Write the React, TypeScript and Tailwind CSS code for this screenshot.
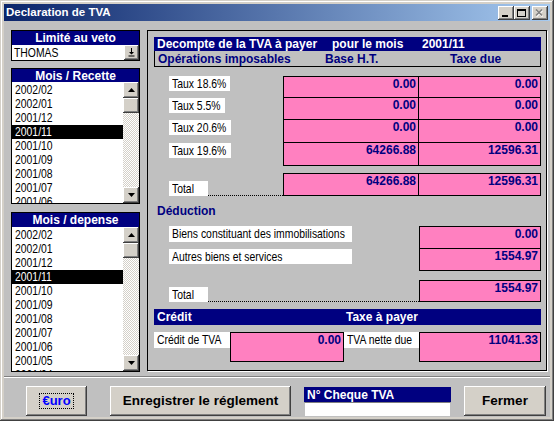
import React from "react";

const raised =
  "bg-[#d4d0c8] shadow-[inset_-1px_-1px_#404040,inset_1px_1px_#ffffff,inset_-2px_-2px_#808080,inset_2px_2px_#d4d0c8]";

function N({ children }: { children: React.ReactNode }) {
  return (
    <span className="inline-block origin-left [transform:scaleX(0.8)] whitespace-nowrap">{children}</span>
  );
}

function TriUp() {
  return (
    <svg width="7" height="4" viewBox="0 0 7 4">
      <path d="M3.5 0 L7 4 L0 4 Z" fill="#000" />
    </svg>
  );
}
function TriDown() {
  return (
    <svg width="7" height="4" viewBox="0 0 7 4">
      <path d="M0 0 L7 0 L3.5 4 Z" fill="#000" />
    </svg>
  );
}

function ScrollBar() {
  return (
    <div className="w-[16px] flex flex-col">
      <div className={`h-[16px] flex items-center justify-center ${raised}`}>
        <TriUp />
      </div>
      <div className={`h-[15px] ${raised}`} />
      <div className="flex-1 bg-[repeating-conic-gradient(#d4d0c8_0%_25%,#ffffff_0%_50%)] bg-[length:2px_2px]" />
      <div className={`h-[16px] flex items-center justify-center ${raised}`}>
        <TriDown />
      </div>
    </div>
  );
}

function ListBlock({
  title,
  items,
  selected,
  headerH,
  listH,
}: {
  title: string;
  items: string[];
  selected: string;
  headerH: string;
  listH: string;
}) {
  return (
    <div className="border border-black">
      <div
        className={`${headerH} bg-[#000080] text-white font-bold text-[12px] leading-none flex items-center justify-center`}
      >
        {title}
      </div>
      <div className={`${listH} bg-white flex`}>
        <div className="flex-1 overflow-hidden pt-[1px]">
          {items.map((it) => (
            <div
              key={it}
              className={`h-[14px] leading-[14px] pl-[3px] text-[13px] ${
                it === selected ? "bg-black text-white" : "text-black"
              }`}
            >
              <N>{it}</N>
            </div>
          ))}
        </div>
        <ScrollBar />
      </div>
    </div>
  );
}

function Label({ text, w, h = "h-[15px]" }: { text: string; w: string; h?: string }) {
  return (
    <div className={`${w} ${h} shrink-0 bg-white text-black text-[13px] leading-[15px] pl-[3px] whitespace-nowrap`}>
      <N>{text}</N>
    </div>
  );
}

function Val({ v, w, extra = "" }: { v: string; w: string; extra?: string }) {
  return (
    <div
      className={`${w} shrink-0 bg-[#ff80c0] border-black ${extra} text-right pr-[2px] pt-[1px] text-[12px] leading-[13px] font-bold text-[#000080]`}
    >
      {v}
    </div>
  );
}

const recette = [
  "2002/02",
  "2002/01",
  "2001/12",
  "2001/11",
  "2001/10",
  "2001/09",
  "2001/08",
  "2001/07",
  "2001/06",
];
const depense = [
  "2002/02",
  "2002/01",
  "2001/12",
  "2001/11",
  "2001/10",
  "2001/09",
  "2001/08",
  "2001/07",
  "2001/06",
  "2001/05",
  "2001/04",
];

const taux = [
  { l: "Taux 18.6%", lw: "w-[61px]", b: "0.00", t: "0.00", h: "h-[22px]" },
  { l: "Taux 5.5%", lw: "w-[56px]", b: "0.00", t: "0.00", h: "h-[22px]" },
  { l: "Taux 20.6%", lw: "w-[62px]", b: "0.00", t: "0.00", h: "h-[23px]" },
  { l: "Taux 19.6%", lw: "w-[62px]", b: "64266.88", t: "12596.31", h: "h-[23px]" },
];

export default function App() {
  return (
    <div className="w-[554px] h-[421px] bg-[#d4d0c8] p-[4px] flex flex-col shadow-[inset_-1px_-1px_#404040,inset_1px_1px_#d4d0c8,inset_-2px_-2px_#808080,inset_2px_2px_#ffffff] font-['Liberation_Sans',Arial,sans-serif] select-none">
      {/* Title bar */}
      <div className="h-[18px] flex items-center bg-[linear-gradient(to_right,#0a246a,#a6caf0)] pl-[2px] pr-[2px]">
        <div className="flex-1 text-white font-bold text-[11.5px] leading-none">Declaration de TVA</div>
        <div className="flex items-center">
          <div className={`w-[16px] h-[14px] flex items-end justify-center pb-[3px] ${raised}`}>
            <div className="w-[6px] h-[2px] bg-black ml-[-2px]" />
          </div>
          <div className={`w-[16px] h-[14px] flex items-center justify-center ${raised}`}>
            <div className="w-[9px] h-[8px] border border-black border-t-2 ml-[-1px]" />
          </div>
          <div className={`w-[16px] h-[14px] ml-[2px] flex items-center justify-center ${raised}`}>
            <svg width="9" height="8" viewBox="0 0 9 8" className="ml-[-1px]">
              <path d="M1.5 1.5 L7.5 7.5 M7.5 1.5 L1.5 7.5" stroke="#ffffff" strokeWidth="1.6" />
              <path d="M1 0.5 L7 6.5 M7 0.5 L1 6.5" stroke="#808080" strokeWidth="1.6" />
            </svg>
          </div>
        </div>
      </div>

      {/* Main area */}
      <div className="flex-1 bg-[#c0c0c0] flex flex-col">
        <div className="flex pt-[9px] pl-[7px] pr-[3px]">
          {/* Left column */}
          <div className="w-[129px] flex flex-col">
            <div className="border border-black">
              <div className="h-[14px] bg-[#000080] text-white font-bold text-[12px] leading-none flex items-center justify-center">
                Limité au veto
              </div>
              <div className="h-[15px] bg-white flex">
                <div className="flex-1 pl-[2px] text-[13px] leading-[15px] text-black overflow-hidden">
                  <N>THOMAS</N>
                </div>
                <div className={`w-[15px] flex items-center justify-center ${raised}`}>
                  <svg width="7" height="9" viewBox="0 0 7 9">
                    <path d="M3 0 H4 V4 H6 L3.5 6.5 L1 4 H3 Z" fill="#000" />
                    <rect x="0.5" y="7.5" width="6" height="1" fill="#000" />
                  </svg>
                </div>
              </div>
            </div>
            <div className="mt-[7px]">
              <ListBlock title="Mois / Recette" items={recette} selected="2001/11" headerH="h-[13px]" listH="h-[121px]" />
            </div>
            <div className="mt-[8px]">
              <ListBlock title="Mois / depense" items={depense} selected="2001/11" headerH="h-[14px]" listH="h-[144px]" />
            </div>
          </div>

          {/* Right panel */}
          <div className="ml-[7px] w-[400px] h-[341px] border border-black shadow-[1px_1px_0_#ffffff] pl-[6px] pr-[5px] pt-[6px] flex flex-col">
            <div className="h-[14px] bg-[#000080] text-white font-bold text-[12px] leading-none flex items-center pl-[3px] whitespace-nowrap">
              <span className="w-[175px]">Decompte de la TVA à payer</span>
              <span className="w-[90px]">pour le mois</span>
              <span>2001/11</span>
            </div>
            <div className="h-[16px] border-x border-b border-black text-[#000080] font-bold text-[12px] leading-none flex items-center pl-[3px] whitespace-nowrap">
              <span className="w-[167px]">Opérations imposables</span>
              <span className="w-[125px]">Base H.T.</span>
              <span>Taxe due</span>
            </div>

            {/* Taux */}
            <div className="mt-[9px] flex flex-col">
              {taux.map((r, i) => (
                <div key={r.l} className={`flex ${r.h}`}>
                  <div className="w-[129px] pl-[15px]">
                    <Label text={r.l} w={r.lw} />
                  </div>
                  <Val v={r.b} w="w-[136px]" extra={`border-l border-r border-b ${i === 0 ? "border-t" : ""}`} />
                  <Val v={r.t} w="w-[122px]" extra={`border-r border-b ${i === 0 ? "border-t" : ""}`} />
                </div>
              ))}
            </div>

            {/* Total */}
            <div className="mt-[7px] flex h-[23px]">
              <div className="w-[129px] pl-[15px] flex items-end">
                <Label text="Total" w="w-[39px]" />
                <div className="flex-1 border-b border-dotted border-black" />
              </div>
              <Val v="64266.88" w="w-[136px]" extra="border" />
              <Val v="12596.31" w="w-[122px]" extra="border-y border-r" />
            </div>

            <div className="mt-[8px] h-[14px] pl-[3px] text-[#000080] font-bold text-[12px] leading-[14px]">
              Déduction
            </div>

            {/* Deduction rows */}
            <div className="mt-[8px] flex flex-col">
              <div className="flex h-[23px]">
                <div className="w-[265px] pl-[15px]">
                  <Label text="Biens constituant des immobilisations" w="w-[183px]" h="h-[16px]" />
                </div>
                <Val v="0.00" w="w-[122px]" extra="border" />
              </div>
              <div className="flex h-[22px]">
                <div className="w-[265px] pl-[15px]">
                  <Label text="Autres biens et services" w="w-[183px]" />
                </div>
                <Val v="1554.97" w="w-[122px]" extra="border-x border-b" />
              </div>
            </div>

            <div className="mt-[9px] flex h-[22px]">
              <div className="w-[265px] pl-[15px] flex items-end">
                <Label text="Total" w="w-[39px]" />
                <div className="flex-1 border-b border-dotted border-black" />
              </div>
              <Val v="1554.97" w="w-[122px]" extra="border" />
            </div>

            <div className="mt-[7px] h-[16px] bg-[#000080] text-white font-bold text-[12px] leading-none flex items-center pl-[3px]">
              <span className="w-[189px]">Crédit</span>
              <span>Taxe à payer</span>
            </div>

            <div className="mt-[7px] flex h-[30px]">
              <Label text="Crédit de TVA" w="w-[76px]" h="h-[16px]" />
              <Val v="0.00" w="w-[114px]" extra="border" />
              <Label text="TVA nette due" w="w-[75px]" h="h-[16px]" />
              <Val v="11041.33" w="w-[122px]" extra="border" />
            </div>
          </div>
        </div>

        {/* separator */}
        <div className="mt-[4px] h-[2px] border-t border-[#808080] border-b border-b-white" />

        {/* bottom row */}
        <div className="flex pt-[8px] pl-[22px]">
          <div className={`w-[61px] h-[30px] flex items-center justify-center ${raised}`}>
            <span className="px-[2px] border border-dotted border-black text-[#0000ff] font-bold text-[13px] leading-[14px]">
              €uro
            </span>
          </div>
          <div className={`ml-[23px] w-[181px] h-[30px] flex items-center justify-center text-black font-bold text-[13.5px] ${raised}`}>
            Enregistrer le réglement
          </div>
          <div className="ml-[13px] w-[147px] flex flex-col pt-[1px]">
            <div className="h-[15px] bg-[#000080] text-white font-bold text-[12px] leading-none flex items-center pl-[3px]">
              N° Cheque TVA
            </div>
            <div className="h-[15px] bg-white border border-[#c0c0c0] border-t-[#808080]" />
          </div>
          <div className={`ml-[13px] w-[82px] h-[30px] flex items-center justify-center text-black font-bold text-[13.5px] ${raised}`}>
            Fermer
          </div>
        </div>
      </div>
    </div>
  );
}
